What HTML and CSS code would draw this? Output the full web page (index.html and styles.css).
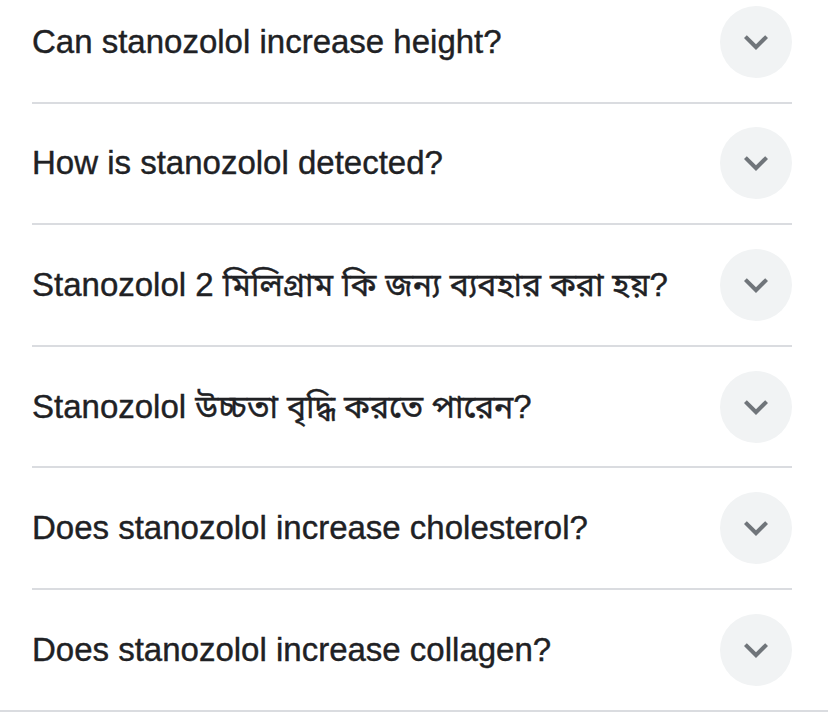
FILE: index.html
```html
<!DOCTYPE html>
<html lang="en">
<head>
<meta charset="utf-8">
<title>FAQ</title>
<link rel="stylesheet" href="styles.css">
</head>
<body>
<section class="faq">
  <div class="item">
    <span class="question">Can stanozolol increase height?</span>
    <span class="toggle"><svg viewBox="0 0 24 24" class="chev"><path d="M16.59 8.59L12 13.17 7.41 8.59 6 10l6 6 6-6z"/></svg></span>
  </div>
  <div class="item">
    <span class="question">How is stanozolol detected?</span>
    <span class="toggle"><svg viewBox="0 0 24 24" class="chev"><path d="M16.59 8.59L12 13.17 7.41 8.59 6 10l6 6 6-6z"/></svg></span>
  </div>
  <div class="item">
    <span class="question">Stanozolol 2 <span class="bn" lang="bn">মিলিগ্রাম কি জন্য ব্যবহার করা হয়</span>?</span>
    <span class="toggle"><svg viewBox="0 0 24 24" class="chev"><path d="M16.59 8.59L12 13.17 7.41 8.59 6 10l6 6 6-6z"/></svg></span>
  </div>
  <div class="item">
    <span class="question">Stanozolol <span class="bn" lang="bn">উচ্চতা বৃদ্ধি করতে পারেন</span>?</span>
    <span class="toggle"><svg viewBox="0 0 24 24" class="chev"><path d="M16.59 8.59L12 13.17 7.41 8.59 6 10l6 6 6-6z"/></svg></span>
  </div>
  <div class="item">
    <span class="question">Does stanozolol increase cholesterol?</span>
    <span class="toggle"><svg viewBox="0 0 24 24" class="chev"><path d="M16.59 8.59L12 13.17 7.41 8.59 6 10l6 6 6-6z"/></svg></span>
  </div>
  <div class="item">
    <span class="question">Does stanozolol increase collagen?</span>
    <span class="toggle"><svg viewBox="0 0 24 24" class="chev"><path d="M16.59 8.59L12 13.17 7.41 8.59 6 10l6 6 6-6z"/></svg></span>
  </div>
</section>
</body>
</html>
```
FILE: styles.css
```css
html, body {
  margin: 0;
  padding: 0;
  background: #ffffff;
  overflow: hidden;
}
body {
  font-family: "Liberation Sans", Arial, "Noto Sans Bengali", "Noto Sans", sans-serif;
  color: #202124;
}
.faq {
  margin-top: -18px;
  border-bottom: 2px solid #dadce0;
}
.item {
  margin: 0 36px 0 32px;
  height: 119.6px;
  display: flex;
  align-items: center;
  justify-content: space-between;
  border-bottom: 2px solid #dadce0;
}
.item:last-child {
  border-bottom: none;
}
.question {
  font-size: 33px;
  line-height: 40px;
  -webkit-text-stroke: 0.4px #202124;
}
.bn {
  font-size: 32px;
}
.toggle {
  width: 72px;
  height: 72px;
  border-radius: 50%;
  background: #f1f3f4;
  display: flex;
  align-items: center;
  justify-content: center;
  flex-shrink: 0;
}
.chev {
  width: 48px;
  height: 48px;
  fill: #70757a;
}
```
